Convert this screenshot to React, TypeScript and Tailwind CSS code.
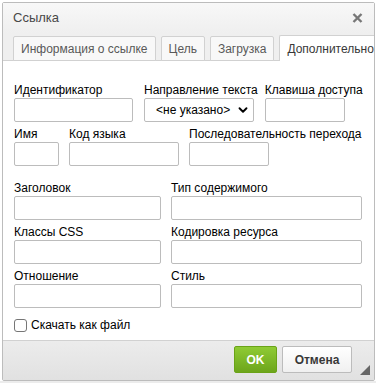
import { ChevronDown } from "lucide-react"

const font = { fontFamily: '"Liberation Sans", Arial, sans-serif' }

const Field = ({ label, w }: { label: string; w: string }) => (
  <div className="flex flex-col">
    <label className="h-[16px] leading-[16px] text-[12px] text-black whitespace-nowrap">{label}</label>
    <div className={`${w} h-[24px] rounded-[2px] border border-[#bcbcbc] bg-white`} />
  </div>
)

const tabs = ["Информация о ссылке", "Цель", "Загрузка"]

export default function App() {
  return (
    <div className="w-[376px] h-[383px] overflow-hidden bg-white flex flex-col" style={font}>
      <div className="pl-[2px] pt-[2px]">
        <div className="w-[373px] h-[379px] border border-[#bcbcbc] rounded-[2px] flex flex-col bg-[#f2f2f2]">
          {/* title */}
          <div className="h-[30px] flex items-center justify-between pl-[10px] pr-[11px] bg-gradient-to-b from-[#f8f8f8] to-[#efefef]">
            <span className="text-[13px] text-[#484848]">Ссылка</span>
            <svg width="11" height="10" viewBox="0 0 11 10">
              <path d="M1.5 1 L9.5 9 M9.5 1 L1.5 9" stroke="#777" strokeWidth="2.4" />
            </svg>
          </div>
          {/* tabs */}
          <div className="h-[28px] flex items-end gap-[5px] pl-[10px] bg-[#efefef] border-b border-[#d1d1d1] whitespace-nowrap">
            {tabs.map((t) => (
              <div
                key={t}
                className="h-[25px] -mb-px px-[7px] flex items-center text-[12px] text-[#595959] border border-[#d1d1d1] rounded-t-[2px] bg-[#f8f8f8]"
              >
                {t}
              </div>
            ))}
            <div className="h-[26px] -mb-px pl-[7px] flex items-center text-[12px] text-[#383838] border border-b-0 border-r-0 border-[#d1d1d1] rounded-tl-[2px] bg-white">
              Дополнительно
            </div>
          </div>
          {/* content */}
          <div className="h-[280px] bg-white pl-[11px] pt-[21px] flex flex-col border-b border-[#d1d1d1]">
            <div className="flex flex-col gap-[4px]">
              <div className="flex">
                <Field label="Идентификатор" w="w-[119px]" />
                <div className="flex flex-col ml-[11px]">
                  <label className="h-[16px] leading-[16px] text-[12px] text-black whitespace-nowrap">Направление текста</label>
                  <div className="w-[110px] h-[24px] rounded-[2px] border border-[#bcbcbc] bg-white flex items-center pl-[11px] pr-[3px] justify-between text-[12px] text-black">
                    <span>&lt;не указано&gt;</span>
                    <ChevronDown size={14} strokeWidth={3.2} className="text-black" />
                  </div>
                </div>
                <div className="ml-[7px]">
                  <Field label="Клавиша доступа" w="w-[80px]" />
                </div>
              </div>
              <div className="flex">
                <Field label="Имя" w="w-[45px]" />
                <div className="ml-[10px]">
                  <Field label="Код языка" w="w-[110px]" />
                </div>
                <div className="ml-[10px]">
                  <Field label="Последовательность перехода" w="w-[80px]" />
                </div>
              </div>
            </div>
            <div className="flex flex-col gap-[4px] mt-[14px]">
              {[
                ["Заголовок", "Тип содержимого"],
                ["Классы CSS", "Кодировка ресурса"],
                ["Отношение", "Стиль"],
              ].map(([a, b]) => (
                <div key={a} className="flex gap-[10px]">
                  <Field label={a} w="w-[147px]" />
                  <Field label={b} w="w-[191px]" />
                </div>
              ))}
            </div>
            <div className="flex items-center mt-[8px] gap-[4px]">
              <div className="w-[13px] h-[13px] rounded-[3px] border border-[#767676] bg-white" />
              <span className="text-[12px] text-black">Скачать как файл</span>
            </div>
          </div>
          {/* footer */}
          <div className="flex-1 flex items-start justify-end pt-[5px] pr-[6px] bg-gradient-to-b from-[#ececec] to-[#e1e1e1] relative">
            <div className="w-[43px] h-[27px] rounded-[2px] border border-[#6aa317] bg-gradient-to-b from-[#8fcb34] to-[#6da51b] flex items-center justify-center text-[12px] font-bold text-white">
              OK
            </div>
            <div className="ml-[5px] w-[70px] h-[27px] rounded-[2px] border border-[#bcbcbc] bg-gradient-to-b from-[#ffffff] to-[#f0f0f0] flex items-center justify-center text-[12px] font-bold text-[#383838]">
              Отмена
            </div>
            <svg className="absolute right-[4px] bottom-[5px]" width="10" height="10" viewBox="0 0 10 10">
              <path d="M10 0 L10 10 L0 10 Z" fill="#666" />
            </svg>
            <div className="w-[16px]" />
          </div>
        </div>
      </div>
      <div className="flex-1 bg-[#ececec]" />
    </div>
  )
}
